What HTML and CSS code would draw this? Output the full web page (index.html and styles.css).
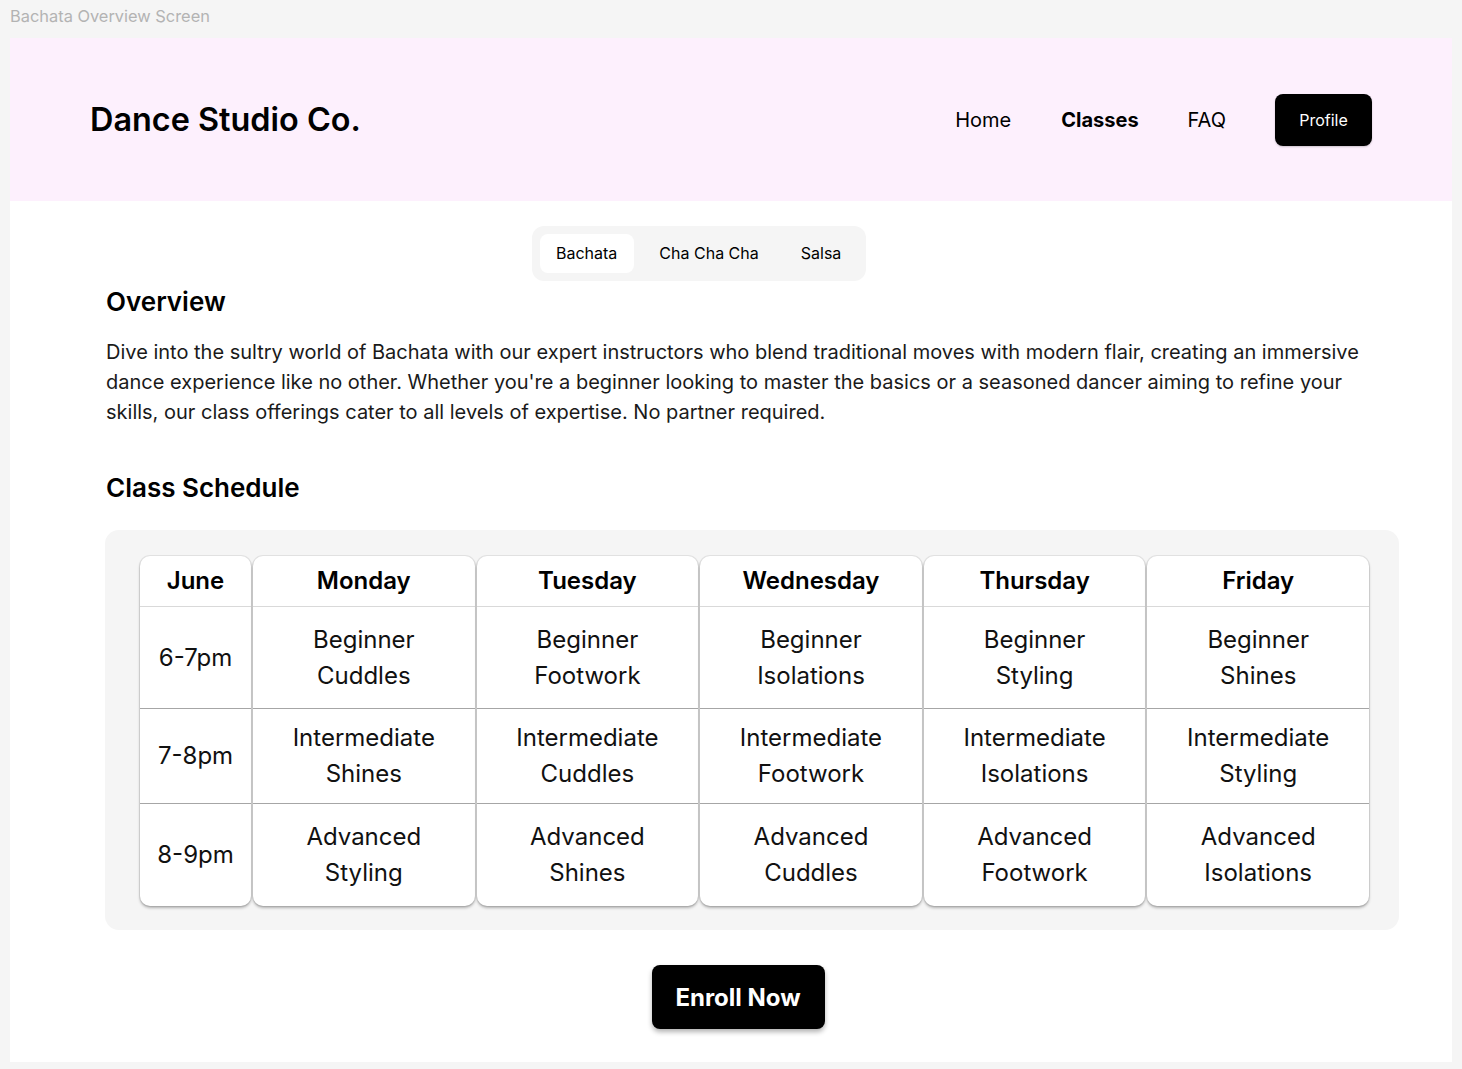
FILE: index.html
```html
<!DOCTYPE html>
<html>
<head>
<meta charset="utf-8">
<link rel="stylesheet" href="styles.css">
</head>
<body>
<div class="screen-label">Bachata Overview Screen</div>
<div class="frame">
  <header class="topbar">
    <div class="logo">Dance Studio Co.</div>
    <nav class="nav">
      <a class="nav-link">Home</a>
      <a class="nav-link active">Classes</a>
      <a class="nav-link">FAQ</a>
      <button class="profile-btn">Profile</button>
    </nav>
  </header>
  <main class="content">
    <div class="tabs-wrap">
      <div class="tabs">
        <div class="tab active">Bachata</div>
        <div class="tab">Cha Cha Cha</div>
        <div class="tab">Salsa</div>
      </div>
    </div>
    <h2 class="section-title overview-title">Overview</h2>
    <p class="overview-text">Dive into the sultry world of Bachata with our expert instructors who blend traditional moves with modern flair, creating an immersive dance experience like no other. Whether you're a beginner looking to master the basics or a seasoned dancer aiming to refine your skills, our class offerings cater to all levels of expertise. No partner required.</p>
    <h2 class="section-title schedule-title">Class Schedule</h2>
    <div class="schedule">
      <div class="grid">
        <div class="col col-first">
          <div class="cell head">June</div>
          <div class="cell r1">6-7pm</div>
          <div class="cell r2">7-8pm</div>
          <div class="cell r3">8-9pm</div>
        </div>
        <div class="col">
          <div class="cell head">Monday</div>
          <div class="cell r1">Beginner<br>Cuddles</div>
          <div class="cell r2">Intermediate<br>Shines</div>
          <div class="cell r3">Advanced<br>Styling</div>
        </div>
        <div class="col">
          <div class="cell head">Tuesday</div>
          <div class="cell r1">Beginner<br>Footwork</div>
          <div class="cell r2">Intermediate<br>Cuddles</div>
          <div class="cell r3">Advanced<br>Shines</div>
        </div>
        <div class="col">
          <div class="cell head">Wednesday</div>
          <div class="cell r1">Beginner<br>Isolations</div>
          <div class="cell r2">Intermediate<br>Footwork</div>
          <div class="cell r3">Advanced<br>Cuddles</div>
        </div>
        <div class="col">
          <div class="cell head">Thursday</div>
          <div class="cell r1">Beginner<br>Styling</div>
          <div class="cell r2">Intermediate<br>Isolations</div>
          <div class="cell r3">Advanced<br>Footwork</div>
        </div>
        <div class="col">
          <div class="cell head">Friday</div>
          <div class="cell r1">Beginner<br>Shines</div>
          <div class="cell r2">Intermediate<br>Styling</div>
          <div class="cell r3">Advanced<br>Isolations</div>
        </div>
      </div>
    </div>
    <div class="enroll-wrap">
      <button class="enroll-btn">Enroll Now</button>
    </div>
  </main>
</div>
</body>
</html>
```

FILE: styles.css
```css
* { box-sizing: border-box; }
html, body { margin: 0; padding: 0; }
body {
  background: #f5f5f5;
  font-family: Inter, "Noto Sans", sans-serif;
  color: #000;
  padding: 0 10px 6px 10px;
}
.screen-label {
  height: 38px;
  padding-top: 6px;
  font-size: 16.4px;
  color: #b3b3b3;
  line-height: 20px;
}
.frame {
  background: #fff;
  width: 1442px;
  height: 1024px;
}
.topbar {
  background: #fdf0fd;
  height: 163px;
  display: flex;
  align-items: center;
  justify-content: space-between;
  padding: 0 80px 0 80px;
}
.logo {
  font-size: 32.4px;
  font-weight: 600;
  letter-spacing: 0;
}
.nav {
  display: flex;
  align-items: center;
}
.nav-link {
  font-size: 20px;
  margin-right: 49px;
  cursor: pointer;
}
.nav-link:first-child { margin-right: 50px; }
.nav-link.active { font-weight: 700; }
.profile-btn {
  background: #000;
  color: #fff;
  border: none;
  border-radius: 8px;
  width: 97px;
  height: 52px;
  font-family: Inter, sans-serif;
  font-size: 16px;
  box-shadow: 0 1px 2px rgba(0,0,0,0.2);
}
.content {
  padding: 25px 0 0 0;
}
.tabs-wrap {
  display: flex;
  justify-content: flex-start;
  padding-left: 522px;
}
.tabs {
  display: flex;
  background: #f5f5f5;
  border-radius: 12px;
  padding: 8px;
  height: 55px;
}
.tab {
  font-size: 16px;
  padding: 0 17px 0 16px;
  height: 39px;
  line-height: 39px;
  border-radius: 8px;
  margin-right: 9px;
}
.tab:last-child { margin-right: 0; padding: 0 17px 0 16px; }
.tab.active { background: #fff; padding: 0 17px 0 16px; }
.section-title {
  font-size: 26px;
  font-weight: 600;
  margin: 0;
  padding-left: 96px;
  line-height: 30px;
}
.overview-title { margin-top: 6px; }
.overview-text {
  font-size: 20px;
  line-height: 30px;
  margin: 20px 0 0 0;
  padding-left: 96px;
  padding-right: 70px;
  color: #1a1a1a;
}
.schedule-title { margin-top: 46px; }
.schedule {
  margin: 27px 53px 0 95px;
  background: #f5f5f5;
  border-radius: 14px;
  padding: 26px 30px 24px 35px;
}
.grid {
  display: grid;
  grid-template-columns: 111px repeat(5, 1fr);
  gap: 2px;
}
.col {
  background: #fff;
  border-radius: 10px;
  box-shadow: 0 2px 3px rgba(0,0,0,0.28), 0 0 0 1px rgba(0,0,0,0.07);
  display: flex;
  flex-direction: column;
  overflow: hidden;
}
.cell {
  display: flex;
  align-items: center;
  justify-content: center;
  text-align: center;
  font-size: 24px;
  line-height: 36px;
  color: #111;
}
.cell.head {
  height: 51px;
  font-weight: 600;
  color: #000;
  border-bottom: 1px solid #d9d9d9;
}
.cell.r1 { height: 102px; border-bottom: 1px solid #a6a6a6; }
.cell.r2 { height: 95px; border-bottom: 1px solid #a6a6a6; }
.cell.r3 { height: 102px; }
.enroll-wrap {
  display: flex;
  justify-content: center;
  margin-top: 35px;
  padding-left: 14px;
}
.enroll-btn {
  background: #000;
  color: #fff;
  border: none;
  border-radius: 8px;
  width: 173px;
  height: 64px;
  font-family: Inter, sans-serif;
  font-size: 24px;
  font-weight: 700;
  box-shadow: 0 3px 5px rgba(0,0,0,0.3);
}
```
